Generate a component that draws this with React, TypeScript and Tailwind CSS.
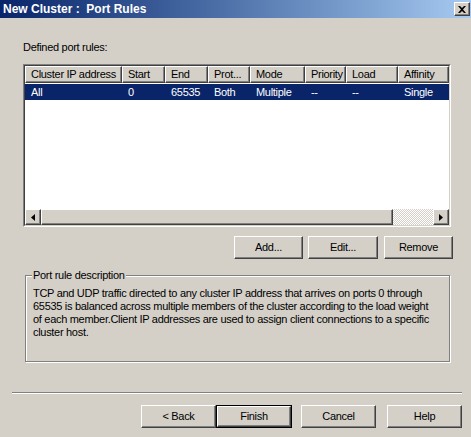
import React from 'react';

const raised =
  'bg-[#d4d0c8] border border-t-white border-l-white border-r-[#404040] border-b-[#404040] shadow-[inset_-1px_-1px_#808080]';

const columns = [
  { label: 'Cluster IP address', w: 'w-[97px]' },
  { label: 'Start', w: 'w-[43px]' },
  { label: 'End', w: 'w-[43px]' },
  { label: 'Prot...', w: 'w-[42px]' },
  { label: 'Mode', w: 'w-[55px]' },
  { label: 'Priority', w: 'w-[41px]' },
  { label: 'Load', w: 'w-[52px]' },
  { label: 'Affinity', w: 'w-[51px]' },
];

const row = ['All', '0', '65535', 'Both', 'Multiple', '--', '--', 'Single'];

const Button = ({ label, w, isDefault }: { label: string; w: string; isDefault?: boolean }) => (
  <div className={`${w} h-[23px] ${isDefault ? 'border border-black' : ''}`}>
    <div className={`${raised} h-full flex items-center justify-center leading-none`}>{label}</div>
  </div>
);

const Arrow = ({ dir }: { dir: 'left' | 'right' }) => (
  <div className={`${raised} w-[16px] h-[16px] flex items-center justify-center`}>
    <svg width="4" height="7" viewBox="0 0 4 7">
      {dir === 'left' ? <path d="M4 0 L4 7 L0 3.5 Z" fill="#000" /> : <path d="M0 0 L0 7 L4 3.5 Z" fill="#000" />}
    </svg>
  </div>
);

export default function App() {
  return (
    <div className="w-[471px] h-[437px] bg-[#d4d0c8] font-['Liberation_Sans',Arial,sans-serif] text-[11px] tracking-[-0.3px] text-black overflow-hidden">
      {/* title bar */}
      <div className="h-[18px] flex items-center justify-between pl-[3px] pr-[1px] bg-gradient-to-r from-[#0a246a] to-[#a6caf0]">
        <span className="text-white font-bold text-[12px] tracking-normal leading-none">New Cluster :&nbsp; Port Rules</span>
        <div className={`${raised} w-[16px] h-[14px] flex items-center justify-center`}>
          <svg width="8" height="7" viewBox="0 0 8 7">
            <path d="M0 0 L2 0 L4 2 L6 0 L8 0 L5 3.5 L8 7 L6 7 L4 5 L2 7 L0 7 L3 3.5 Z" fill="#000" />
          </svg>
        </div>
      </div>

      <div className="mt-[23px] ml-[23px] leading-[13px]">Defined port rules:</div>

      {/* list view */}
      <div className="mt-[10px] ml-[23px] w-[428px] h-[163px] border border-t-[#808080] border-l-[#808080] border-r-white border-b-white">
        <div className="h-full flex flex-col bg-white border border-t-[#404040] border-l-[#404040] border-r-[#d4d0c8] border-b-[#d4d0c8]">
          <div className="flex h-[17px] overflow-hidden">
            {columns.map(c => (
              <div key={c.label} className={`${c.w} shrink-0 ${raised} flex items-center pl-[5px] leading-none whitespace-nowrap overflow-hidden`}>
                {c.label}
              </div>
            ))}
          </div>
          <div className="flex h-[16px] mt-[1px] bg-[#0a246a] text-white overflow-hidden">
            {columns.map((c, i) => (
              <div key={c.label} className={`${c.w} shrink-0 flex items-center pl-[6px] leading-none whitespace-nowrap`}>
                {row[i]}
              </div>
            ))}
          </div>
          <div className="flex-1" />
          <div className="flex h-[16px]">
            <Arrow dir="left" />
            <div className={`${raised} w-[352px]`} />
            <div className="flex-1 bg-[repeating-conic-gradient(#d4d0c8_0_25%,#ffffff_0_50%)] bg-[length:2px_2px]" />
            <Arrow dir="right" />
          </div>
        </div>
      </div>

      {/* list buttons */}
      <div className="mt-[9px] ml-[234px] flex">
        <Button label="Add..." w="w-[69px]" />
        <div className="ml-[5px]">
          <Button label="Edit..." w="w-[70px]" />
        </div>
        <div className="ml-[6px]">
          <Button label="Remove" w="w-[69px]" />
        </div>
      </div>

      {/* group box */}
      <div className="relative mt-[16px] ml-[25px] w-[425px] h-[87px] border border-[#808080] shadow-[1px_1px_0_#fff,inset_1px_1px_0_#fff]">
        <span className="absolute -top-[7px] left-[6px] px-[1px] bg-[#d4d0c8] leading-[13px]">Port rule description</span>
        <div className="pt-[11px] pl-[7px] leading-[13px] whitespace-nowrap">
          <div>TCP and UDP traffic directed to any cluster IP address that arrives on ports 0 through</div>
          <div>65535 is balanced across multiple members of the cluster according to the load weight</div>
          <div>of each member.Client IP addresses are used to assign client connections to a specific</div>
          <div>cluster host.</div>
        </div>
      </div>

      {/* separator */}
      <div className="mt-[30px] ml-[12px] w-[450px] border-t border-t-[#808080] border-b border-b-white" />

      {/* wizard buttons */}
      <div className="mt-[11px] ml-[141px] flex">
        <Button label="< Back" w="w-[75px]" />
        <Button label="Finish" w="w-[76px]" isDefault />
        <div className="ml-[9px]">
          <Button label="Cancel" w="w-[75px]" />
        </div>
        <div className="ml-[11px]">
          <Button label="Help" w="w-[75px]" />
        </div>
      </div>
    </div>
  );
}
